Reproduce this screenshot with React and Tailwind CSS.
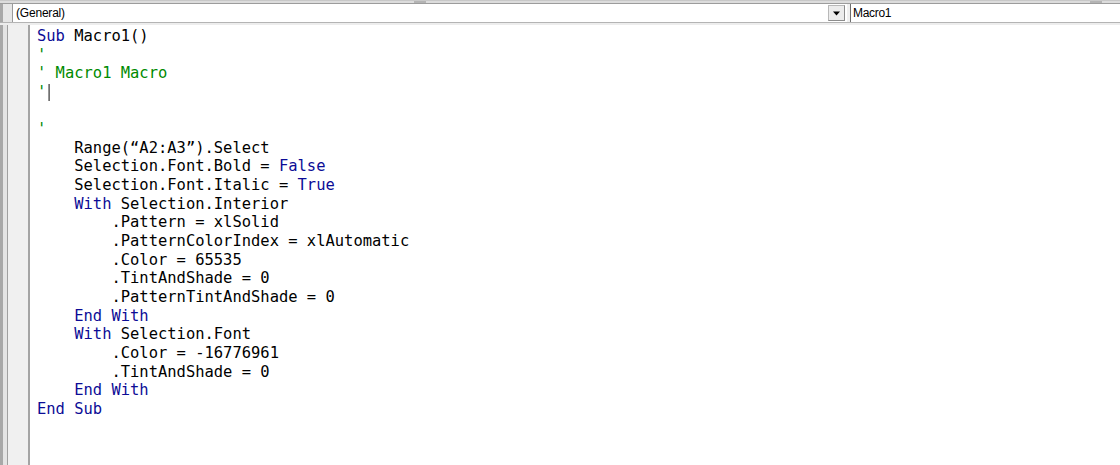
import React from "react";

const KW = "text-[#0c0c96]";
const CM = "text-[#008a00]";

// each line: list of [text, kind] where kind is "k" keyword, "c" comment, "" plain
const lines = [
  [["Sub", "k"], [" Macro1()", ""]],
  [["'", "c"]],
  [["' Macro1 Macro", "c"]],
  [["'", "c"]],
  [],
  [["'", "c"]],
  [["    Range(“A2:A3”).Select", ""]],
  [["    Selection.Font.Bold = ", ""], ["False", "k"]],
  [["    Selection.Font.Italic = ", ""], ["True", "k"]],
  [["    ", ""], ["With", "k"], [" Selection.Interior", ""]],
  [["        .Pattern = xlSolid", ""]],
  [["        .PatternColorIndex = xlAutomatic", ""]],
  [["        .Color = 65535", ""]],
  [["        .TintAndShade = 0", ""]],
  [["        .PatternTintAndShade = 0", ""]],
  [["    ", ""], ["End With", "k"]],
  [["    ", ""], ["With", "k"], [" Selection.Font", ""]],
  [["        .Color = -16776961", ""]],
  [["        .TintAndShade = 0", ""]],
  [["    ", ""], ["End With", "k"]],
  [["End Sub", "k"]],
];

function CodeLine({ parts, caret }) {
  return (
    <div className="h-[18.65px] leading-[18.65px] whitespace-pre flex items-center">
      {parts.map(([t, k], i) => (
        <span key={i} className={k === "k" ? KW : k === "c" ? CM : "text-black"}>
          {t}
        </span>
      ))}
      {caret && <span className="inline-block w-px h-[17px] bg-black ml-[2px]" />}
    </div>
  );
}

function DropArrow() {
  return (
    <svg width="9" height="5" viewBox="0 0 9 5">
      <path d="M1 0.5 L8 0.5 L4.5 4.5 Z" fill="#000" />
    </svg>
  );
}

export default function App() {
  return (
    <div className="w-[1120px] h-[465px] bg-white overflow-hidden flex flex-col">
      {/* window frame top */}
      <div className="h-[4px] bg-[#dcdcdc] border-t border-[#c8c8c8] border-b border-b-[#9c9c9c] flex">
        <div className="w-[414px]" />
        <div className="w-[12px] bg-[#b4b4b4]" />
        <div className="flex-1" />
        <div className="w-[12px] bg-[#b4b4b4]" />
        <div className="w-[18px]" />
      </div>

      {/* combo row */}
      <div className="h-[18px] flex bg-[#f0f0f0]">
        <div className="w-[12px] bg-[#e6e6e6] border-l-[3px] border-[#a8a8a8]" />
        <div className="w-[835px] bg-white flex items-center border-l border-[#9a9a9a]">
          <span className="pl-[3px] text-[12px] leading-none text-black font-['Liberation_Sans',sans-serif] tracking-[-0.2px]">
            (General)
          </span>
          <div className="flex-1" />
          <div className="w-[17px] h-[16px] bg-[#ececec] border border-[#b8b8b8] border-b-[#8c8c8c] border-r-[#8c8c8c] flex items-center justify-center mr-[2px]">
            <DropArrow />
          </div>
        </div>
        <div className="w-[3px] bg-[#f0f0f0]" />
        <div className="flex-1 bg-white flex items-center border-l border-[#6e6e6e]">
          <span className="pl-[2px] text-[12px] leading-none text-black font-['Liberation_Sans',sans-serif] tracking-[-0.3px]">
            Macro1
          </span>
        </div>
      </div>

      {/* separator under combos */}
      <div className="h-[3px] bg-[#ededed] border-t border-[#b4b4b4]" />

      {/* editor body */}
      <div className="flex-1 flex">
        <div className="w-[3px] bg-[#a8a8a8]" />
        <div className="w-[4px] bg-[#e4e4e4]" />
        <div className="w-px bg-[#a0a0a0]" />
        <div className="w-[20px] bg-[#f0f0f0]" />
        <div className="w-[2px] bg-[#a4a4a4]" />
        <div className="flex-1 pl-[7px] pt-[2px] overflow-hidden">
          <div className="origin-left scale-x-[0.966] w-[1200px] font-['DejaVu_Sans_Mono',monospace] text-[16px]">
            {lines.map((p, i) => (
              <CodeLine key={i} parts={p} caret={i === 3} />
            ))}
          </div>
        </div>
      </div>
    </div>
  );
}
